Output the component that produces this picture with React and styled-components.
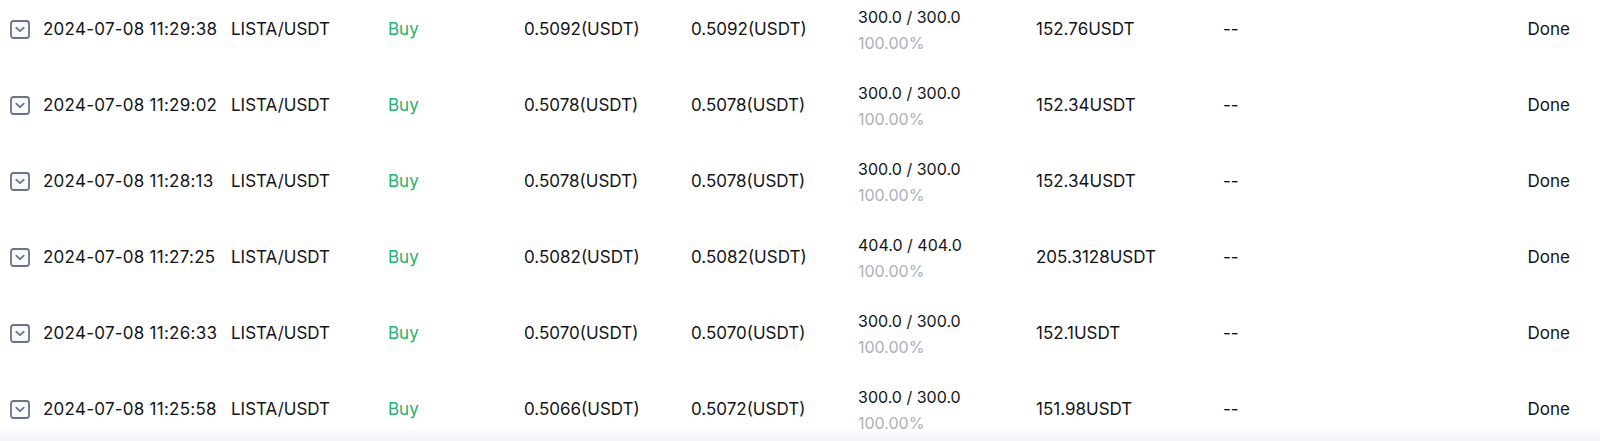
import React from "react";
import styled, { createGlobalStyle } from "styled-components";

const Global = createGlobalStyle`
  html, body { margin: 0; padding: 0; background: #ffffff; }
  body { font-family: Inter, "Noto Sans", "Liberation Sans", sans-serif; color: #131418; }
`;

const Page = styled.div`
  width: 1600px;
  height: 441px;
  overflow: hidden;
  background: linear-gradient(to bottom, #ffffff 0, #ffffff 428px, #f3f4f7 441px);
`;

const List = styled.div`
  display: flex;
  flex-direction: column;
  margin-top: -9px;
`;

const Row = styled.div`
  display: grid;
  grid-template-columns: 33px 188px 157px 136px 167px 167px 178px 187px 1fr auto;
  align-items: center;
  height: 76px;
  padding: 0 30px 0 10px;
  font-size: 17px;
`;

const Toggle = styled.span`
  display: flex;
  align-items: center;
  justify-content: center;
  width: 20px;
  height: 19px;
  color: #6c7283;
  svg { display: block; }
`;

const Cell = styled.span`
  white-space: nowrap;
  color: ${(p) => p.$color || "#131418"};
  letter-spacing: ${(p) => p.$spacing || "0"};
`;

const Stack = styled.div`
  display: flex;
  flex-direction: column;
  gap: 4px;
  padding-top: 1px;
  font-size: 16px;
  line-height: 22px;
`;

const Pct = styled.span`
  color: #aab0bd;
`;

const Status = styled.span`
  white-space: nowrap;
  text-align: right;
`;

const ExpandIcon = () => (
  <svg width="20" height="19" viewBox="0 0 20 19" fill="none">
    <rect x="1" y="1" width="18" height="17" rx="2.5" fill="#f7f8fa" stroke="currentColor" strokeWidth="1.8" />
    <path d="M6.3 7.7 L10 11.1 L13.7 7.7" stroke="currentColor" strokeWidth="1.8" strokeLinecap="round" strokeLinejoin="round" />
  </svg>
);

const rows = [
  ["2024-07-08 11:29:38", "0.5092", "0.5092", "300.0 / 300.0", "152.76USDT"],
  ["2024-07-08 11:29:02", "0.5078", "0.5078", "300.0 / 300.0", "152.34USDT"],
  ["2024-07-08 11:28:13", "0.5078", "0.5078", "300.0 / 300.0", "152.34USDT"],
  ["2024-07-08 11:27:25", "0.5082", "0.5082", "404.0 / 404.0", "205.3128USDT"],
  ["2024-07-08 11:26:33", "0.5070", "0.5070", "300.0 / 300.0", "152.1USDT"],
  ["2024-07-08 11:25:58", "0.5066", "0.5072", "300.0 / 300.0", "151.98USDT"],
];

export default function App() {
  return (
    <Page>
      <Global />
      <List>
        {rows.map(([time, price, avg, filled, total]) => (
          <Row key={time}>
            <Toggle><ExpandIcon /></Toggle>
            <Cell $spacing="0.25px">{time}</Cell>
            <Cell>LISTA/USDT</Cell>
            <Cell $color="#20b36d">Buy</Cell>
            <Cell>{price}(USDT)</Cell>
            <Cell>{avg}(USDT)</Cell>
            <Stack>
              <Cell>{filled}</Cell>
              <Pct>100.00%</Pct>
            </Stack>
            <Cell>{total}</Cell>
            <Cell>--</Cell>
            <Status>Done</Status>
          </Row>
        ))}
      </List>
    </Page>
  );
}
